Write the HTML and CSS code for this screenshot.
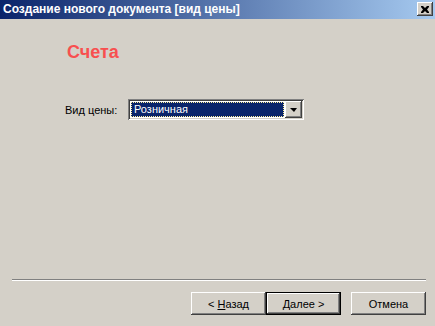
FILE: index.html
```html
<!doctype html>
<html>
<head>
<meta charset="utf-8">
<title>Создание нового документа [вид цены]</title>
<link rel="stylesheet" href="styles.css">
</head>
<body>
<div class="window">
    <div class="titlebar">
        <span class="title">Создание нового документа [вид цены]</span>
        <span class="close"><svg width="8" height="7" viewBox="0 0 8 7"><path d="M0 0h2l2 2 2-2h2v1l-2 2.5 2 2.5v1h-2l-2-2-2 2h-2v-1l2-2.5-2-2.5z" fill="#000"/></svg></span>
    </div>
    <div class="content">
        <h1>Счета</h1>
        <div class="field">
            <label>Вид цены:</label>
            <div class="combo">
                <div class="combo-value"><span>Розничная</span></div>
                <div class="combo-btn"><i></i></div>
            </div>
        </div>
    </div>
    <div class="footer">
        <div class="separator"></div>
        <div class="buttons">
            <button class="btn">&lt; <u>Н</u>азад</button>
            <button class="btn default"><u>Д</u>алее &gt;</button>
            <button class="btn cancel">Отмена</button>
        </div>
    </div>
</div>
</body>
</html>
```
FILE: styles.css
```css
*{
    margin: 0;
    padding: 0;
    box-sizing: border-box;
}
body{
    background: #d4d0c8;
    font-family: "Liberation Sans", Arial, sans-serif;
    font-size: 11px;
    color: #000;
}
.window{
    width: 435px;
    height: 326px;
    display: flex;
    flex-direction: column;
}
.titlebar{
    height: 19px;
    display: flex;
    align-items: center;
    padding: 0 2px 1px 3px;
    background: linear-gradient(to right, #0a246a, #a6caf0);
}
.title{
    color: #fff;
    font-family: "Liberation Sans", Arial, sans-serif;
    font-weight: bold;
    font-size: 12px;
}
.close{
    margin-left: auto;
    width: 16px;
    height: 14px;
    display: flex;
    align-items: center;
    justify-content: center;
    background: #d4d0c8;
    box-shadow: inset -1px -1px #404040, inset 1px 1px #fff, inset -2px -2px #808080, inset 2px 2px #d4d0c8;
}
.content{
    flex: 1;
    padding: 23px 0 0 65px;
}
h1{
    margin-left: 2px;
    font-size: 18px;
    line-height: 20px;
    font-weight: bold;
    color: #f84f4f;
}
.field{
    margin-top: 37px;
    display: flex;
    align-items: center;
}
.field label{
    width: 63px;
}
.combo{
    width: 176px;
    height: 21px;
    display: flex;
    padding: 2px;
    background: #fff;
    box-shadow: inset 1px 1px #808080, inset -1px -1px #fff, inset 2px 2px #404040, inset -2px -2px #d4d0c8;
}
.combo-value{
    flex: 1;
    padding: 1px;
}
.combo-value span{
    display: block;
    height: 15px;
    line-height: 13px;
    padding-left: 2px;
    color: #fff;
    background: #0a246a;
    border: 1px dotted #ffef9a;
}
.combo-btn{
    width: 17px;
    display: flex;
    align-items: center;
    justify-content: center;
    background: #d4d0c8;
    box-shadow: inset -1px -1px #404040, inset 1px 1px #fff, inset -2px -2px #808080, inset 2px 2px #d4d0c8;
}
.combo-btn i{
    width: 0;
    height: 0;
    border-left: 4px solid transparent;
    border-right: 3px solid transparent;
    border-top: 4px solid #000;
}
.footer{
    padding: 0 9px 11px 12px;
}
.separator{
    height: 2px;
    border-top: 1px solid #808080;
    border-bottom: 1px solid #fff;
}
.buttons{
    margin-top: 11px;
    display: flex;
    justify-content: flex-end;
}
.btn{
    width: 75px;
    height: 23px;
    border: none;
    background: #d4d0c8;
    font-family: "Liberation Sans", Arial, sans-serif;
    font-size: 11px;
    color: #000;
    box-shadow: inset -1px -1px #404040, inset 1px 1px #fff, inset -2px -2px #808080, inset 2px 2px #d4d0c8;
}
.btn.default{
    box-shadow: inset 0 0 0 1px #000, inset -2px -2px #404040, inset 2px 2px #fff, inset -3px -3px #808080;
}
.btn.cancel{
    margin-left: 10px;
}
```
